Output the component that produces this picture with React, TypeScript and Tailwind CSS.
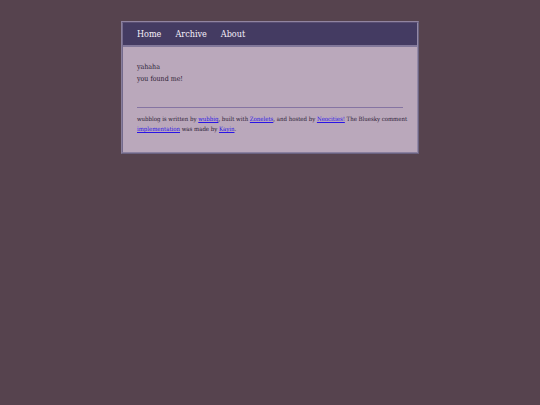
import type { ReactNode } from "react";

const navItems = ["Home", "Archive", "About"];

function FooterLink({ children }: { children: ReactNode }) {
  return (
    <a href="#" className="text-[#2a14e6] underline">
      {children}
    </a>
  );
}

export default function App() {
  return (
    <div className="min-h-screen bg-[#56434e] px-4 pt-[21px] font-['DejaVu_Serif_Condensed','DejaVu_Serif',serif] text-[#2c2035]">
      <div className="mx-auto w-full max-w-[298px] border border-t-[#9184a0] border-r-[#6a6280] border-b-[#6a6280] border-l-[#8a7f9c]">
        <div className="border border-t-[#5a4f74] border-r-[#9489a6] border-b-[#8a809f] border-l-[#746a8c] bg-[#baa8bb]">
          <nav className="border-b-2 border-[#82789a] bg-[#443b62] px-[14px]">
            <ul className="flex gap-[14px] text-[9px] leading-[22px] text-[#f6f0fa]">
              {navItems.map((item) => (
                <li key={item}>
                  <a href="#">{item}</a>
                </li>
              ))}
            </ul>
          </nav>
          <main className="px-[14px] pt-[14px] text-[7px] leading-[12px]">
            <p>yahaha</p>
            <p>you found me!</p>
          </main>
          <footer className="mx-[14px] mt-[22px] border-t border-[#8574a2] pt-[6px] pb-[18px] text-[6px] leading-[10px]">
            <p className="-mr-2">
              wubblog is written by <FooterLink>wubbiq</FooterLink>, built with{" "}
              <FooterLink>Zonelets</FooterLink>, and hosted by{" "}
              <FooterLink>Neocities!</FooterLink> The Bluesky comment{" "}
              <FooterLink>implementation</FooterLink> was made by{" "}
              <FooterLink>Kayin</FooterLink>.
            </p>
          </footer>
        </div>
      </div>
    </div>
  );
}
